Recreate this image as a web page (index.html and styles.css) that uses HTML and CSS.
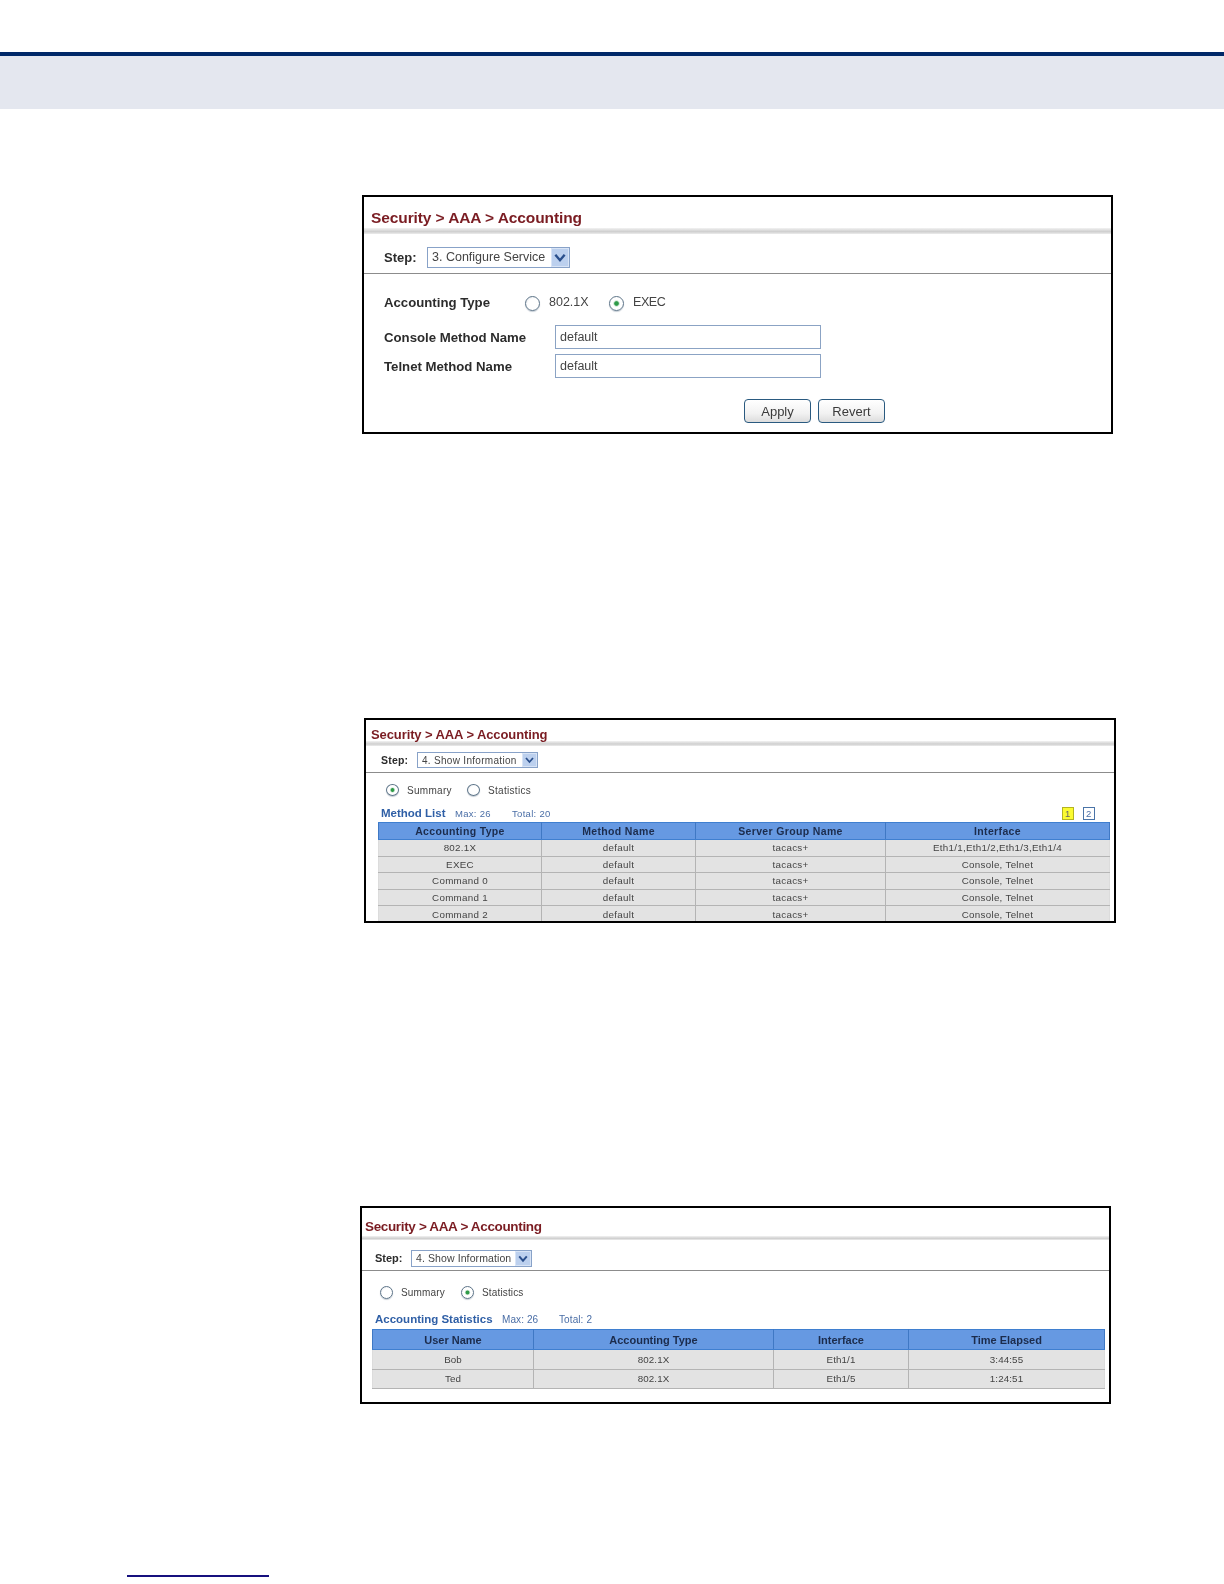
FILE: index.html
```html
<!DOCTYPE html>
<html lang="en">
<head>
<meta charset="utf-8">
<title>Security &gt; AAA &gt; Accounting</title>
<link rel="stylesheet" href="styles.css">
</head>
<body>
<header class="top-band"></header>
<main class="page">

<section class="panel panel-a">
  <h2 class="title">Security &gt; AAA &gt; Accounting</h2>
  <div class="shade"></div>
  <div class="step">
    <span class="step-label">Step:</span>
    <span class="select"><span class="select-text">3. Configure Service</span><span class="arrow"><svg viewBox="0 0 12 12"><path d="M2.5 4 L6 8 L9.5 4" fill="none" stroke="#2a4f8c" stroke-width="1.8"/></svg></span></span>
  </div>
  <div class="form">
    <div class="type-row">
      <span class="field-label type-label">Accounting Type</span>
      <span class="radio"></span><span class="opt opt-first">802.1X</span>
      <span class="radio on"></span><span class="opt opt-exec">EXEC</span>
    </div>
    <div class="fields">
      <span class="field-label">Console Method Name</span><span class="input">default</span>
      <span class="field-label">Telnet Method Name</span><span class="input">default</span>
    </div>
    <div class="buttons">
      <span class="btn btn-apply">Apply</span><span class="btn btn-revert">Revert</span>
    </div>
  </div>
</section>

<section class="panel panel-b">
  <h2 class="title">Security &gt; AAA &gt; Accounting</h2>
  <div class="shade"></div>
  <div class="step">
    <span class="step-label">Step:</span>
    <span class="select"><span class="select-text">4. Show Information</span><span class="arrow"><svg viewBox="0 0 12 12"><path d="M2.5 4 L6 8 L9.5 4" fill="none" stroke="#2a4f8c" stroke-width="1.8"/></svg></span></span>
  </div>
  <div class="views">
    <span class="radio on"></span><span class="opt opt-first">Summary</span>
    <span class="radio"></span><span class="opt">Statistics</span>
  </div>
  <div class="list-head">
    <span class="list-title">Method List</span><span class="meta meta-max">Max: 26</span><span class="meta">Total: 20</span>
    <span class="pager"><span class="pg pg-on">1</span><span class="pg">2</span></span>
  </div>
  <table class="grid">
    <colgroup><col class="b1"><col class="b2"><col class="b3"><col class="b4"></colgroup>
    <thead><tr><th>Accounting Type</th><th>Method Name</th><th>Server Group Name</th><th>Interface</th></tr></thead>
    <tbody>
      <tr><td>802.1X</td><td>default</td><td>tacacs+</td><td>Eth1/1,Eth1/2,Eth1/3,Eth1/4</td></tr>
      <tr><td>EXEC</td><td>default</td><td>tacacs+</td><td>Console, Telnet</td></tr>
      <tr><td>Command 0</td><td>default</td><td>tacacs+</td><td>Console, Telnet</td></tr>
      <tr><td>Command 1</td><td>default</td><td>tacacs+</td><td>Console, Telnet</td></tr>
      <tr><td>Command 2</td><td>default</td><td>tacacs+</td><td>Console, Telnet</td></tr>
    </tbody>
  </table>
</section>

<section class="panel panel-c">
  <h2 class="title">Security &gt; AAA &gt; Accounting</h2>
  <div class="shade"></div>
  <div class="step">
    <span class="step-label">Step:</span>
    <span class="select"><span class="select-text">4. Show Information</span><span class="arrow"><svg viewBox="0 0 12 12"><path d="M2.5 4 L6 8 L9.5 4" fill="none" stroke="#2a4f8c" stroke-width="1.8"/></svg></span></span>
  </div>
  <div class="views">
    <span class="radio"></span><span class="opt opt-first">Summary</span>
    <span class="radio on"></span><span class="opt">Statistics</span>
  </div>
  <div class="list-head">
    <span class="list-title">Accounting Statistics</span><span class="meta meta-max">Max: 26</span><span class="meta">Total: 2</span>
  </div>
  <table class="grid">
    <colgroup><col class="c1"><col class="c2"><col class="c3"><col class="c4"></colgroup>
    <thead><tr><th>User Name</th><th>Accounting Type</th><th>Interface</th><th>Time Elapsed</th></tr></thead>
    <tbody>
      <tr><td>Bob</td><td>802.1X</td><td>Eth1/1</td><td>3:44:55</td></tr>
      <tr><td>Ted</td><td>802.1X</td><td>Eth1/5</td><td>1:24:51</td></tr>
    </tbody>
  </table>
</section>

</main>
<footer class="foot"><div class="foot-rule"></div></footer>
</body>
</html>
```
FILE: styles.css
```css
* { box-sizing: border-box; }
html, body { margin: 0; padding: 0; background: #fff; }
body { height: 1584px; overflow: hidden; padding-top: 52px; font-family: "Liberation Sans", Arial, sans-serif; color: #333; }

.top-band { height: 57px; background: #e4e7ef; border-top: 4px solid #002868; }

.page { display: flex; flex-direction: column; }

.panel { border: 2px solid #000; background: #fff; overflow: hidden; flex: none; filter: blur(0.35px); }
.panel-a { width: 751px; height: 239px; margin: 86px 0 0 362px; }
.panel-b { width: 752px; height: 205px; margin: 284px 0 0 364px; }
.panel-c { width: 751px; height: 198px; margin: 283px 0 0 360px; }

.title { margin: 0; color: #7a1c22; font-weight: bold; white-space: nowrap; }
.shade { background: linear-gradient(#f2f2f2, #cfcfcf 60%, #ececec); }
.step { display: flex; align-items: center; border-bottom: 1px solid #8c8c8c; }
.step-label { font-weight: bold; color: #2c2c2c; }
.select { display: flex; align-items: center; justify-content: space-between; border: 1px solid #88a2c8; background: #fff; }
.select-text { white-space: nowrap; color: #444; }
.arrow { display: flex; align-items: center; justify-content: center; background: #bcd0ee; border: 1px solid #d8e4f6; }
.arrow svg { display: block; width: 100%; height: 100%; }

.radio { flex: none; display: block; border-radius: 50%; border: 1px solid #5d7488; background: radial-gradient(circle at 60% 60%, #fff 55%, #d6dbe2); box-shadow: 0 1px 1px #c4ccd4; }
.radio.on { background: radial-gradient(circle, #2f9b48 0 20%, #cfe6d4 30%, #fff 40% 100%); }
.opt { white-space: nowrap; color: #444; }

/* Panel A */
.panel-a .title { height: 31px; padding-left: 7px; font-size: 15.5px; line-height: 41px; letter-spacing: -0.1px; }
.panel-a .shade { height: 6px; }
.panel-a .step { height: 40px; padding: 7px 0 0 20px; }
.panel-a .step-label { width: 43px; font-size: 13px; }
.panel-a .select { width: 143px; height: 21px; padding-left: 4px; }
.panel-a .select-text { font-size: 12.5px; }
.panel-a .arrow { width: 18px; height: 19px; }
.form { padding: 0 0 0 20px; }
.field-label { font-size: 13.2px; font-weight: bold; color: #2c2c2c; white-space: nowrap; }
.type-row { display: flex; align-items: center; height: 24px; margin-top: 16px; }
.type-label { width: 141px; }
.panel-a .radio { width: 15px; height: 15px; margin-top: 2px; }
.panel-a .opt { font-size: 12.5px; padding-left: 9px; }
.panel-a .opt-first { width: 69px; }
.panel-a .opt-exec { letter-spacing: -0.4px; }
.fields { display: grid; grid-template-columns: 171px 266px; grid-auto-rows: 24px; row-gap: 5px; align-items: center; margin-top: 11px; }
.input { display: flex; align-items: center; height: 24px; padding-left: 4px; border: 1px solid #8ba3c4; font-size: 12.5px; color: #444; }
.buttons { display: flex; gap: 7px; margin: 21px 0 0 360px; }
.btn { display: flex; align-items: center; justify-content: center; width: 67px; height: 24px; border: 1.5px solid #2a5a80; border-radius: 4px; background: linear-gradient(#fff, #f2f2f2 60%, #dcdcdc); font-size: 13px; color: #3a3a3a; }

/* Panels B and C */
.list-head { display: flex; align-items: center; white-space: nowrap; }
.list-title { font-weight: bold; color: #2f5fa6; }
.meta { color: #4a6ea6; }
.views { display: flex; align-items: center; }
.grid { border-collapse: collapse; table-layout: fixed; }
.grid th { background: #6699e2; color: #1c2c4c; font-weight: bold; text-align: center; padding: 0; border-top: 1px solid #3f7fd0; border-bottom: 1px solid #3f7fd0; border-left: 1px solid #3f78c4; border-right: 1px solid #3f78c4; }
.grid td { background: #e3e3e3; color: #444; text-align: center; padding: 0; border: 1px solid #b4b4b4; }
.grid td:first-child { border-left-color: #dcdcdc; }
.grid td:last-child { border-right-color: #dcdcdc; }

/* Panel B */
.panel-b .title { height: 21px; padding-left: 5px; font-size: 13px; line-height: 29px; letter-spacing: -0.1px; }
.panel-b .shade { height: 5px; }
.panel-b .step { height: 27px; padding: 2px 0 0 15px; }
.panel-b .step-label { width: 36px; font-size: 10.5px; letter-spacing: 0.2px; }
.panel-b .select { width: 121px; height: 16px; padding-left: 4px; }
.panel-b .select-text { font-size: 10px; letter-spacing: 0.3px; }
.panel-b .arrow { width: 15px; height: 14px; }
.panel-b .views { height: 14px; margin: 10px 0 0 20px; }
.panel-b .radio { width: 13px; height: 12px; }
.panel-b .opt { font-size: 10px; letter-spacing: 0.3px; padding-left: 8px; }
.panel-b .opt-first { width: 68px; }
.panel-b .list-head { height: 16px; margin: 8px 0 0 15px; }
.panel-b .list-title { width: 74px; font-size: 11.5px; }
.panel-b .meta { font-size: 9.5px; letter-spacing: 0.3px; }
.panel-b .meta-max { width: 57px; }
.pager { display: flex; gap: 9px; margin-left: 511px; }
.pg { display: flex; align-items: center; justify-content: center; width: 12px; height: 13px; border: 1px solid #4a74a8; font-size: 9.5px; color: #4a6ea6; }
.pg-on { background: #fbfb30; border-color: #b4b420; color: #666; }
.panel-b .grid { width: 731px; margin: 1px 0 0 12px; }
.b1 { width: 163px; }
.b2 { width: 154px; }
.b3 { width: 190px; }
.b4 { width: 224px; }
.panel-b .grid th { height: 17px; font-size: 10.5px; letter-spacing: 0.35px; }
.panel-b .grid td { height: 16.6px; font-size: 9.8px; letter-spacing: 0.28px; }

/* Panel C */
.panel-c .title { height: 28px; padding-left: 3px; font-size: 13.5px; line-height: 38px; letter-spacing: -0.35px; }
.panel-c .shade { height: 4px; }
.panel-c .step { height: 31px; padding: 6px 0 0 13px; }
.panel-c .step-label { width: 36px; font-size: 11px; }
.panel-c .select { width: 121px; height: 17px; padding-left: 4px; }
.panel-c .select-text { font-size: 10.5px; letter-spacing: 0.1px; }
.panel-c .arrow { width: 16px; height: 15px; }
.panel-c .views { height: 14px; margin: 14px 0 0 18px; }
.panel-c .radio { width: 13px; height: 13px; }
.panel-c .opt { font-size: 10px; letter-spacing: 0.15px; padding-left: 8px; }
.panel-c .opt-first { width: 68px; }
.panel-c .list-head { height: 16px; margin: 12px 0 0 13px; }
.panel-c .list-title { width: 127px; font-size: 11.5px; }
.panel-c .meta { font-size: 10px; letter-spacing: 0.1px; }
.panel-c .meta-max { width: 57px; }
.panel-c .grid { width: 732px; margin: 2px 0 0 10px; }
.c1 { width: 161px; }
.c2 { width: 240px; }
.c3 { width: 135px; }
.c4 { width: 196px; }
.panel-c .grid th { height: 20px; font-size: 11px; }
.panel-c .grid td { height: 19.5px; font-size: 9.8px; letter-spacing: 0.1px; }

/* Footer */
.foot { margin: 171px 0 0 127px; }
.foot-rule { width: 142px; height: 1.5px; background: #16107e; }
```
